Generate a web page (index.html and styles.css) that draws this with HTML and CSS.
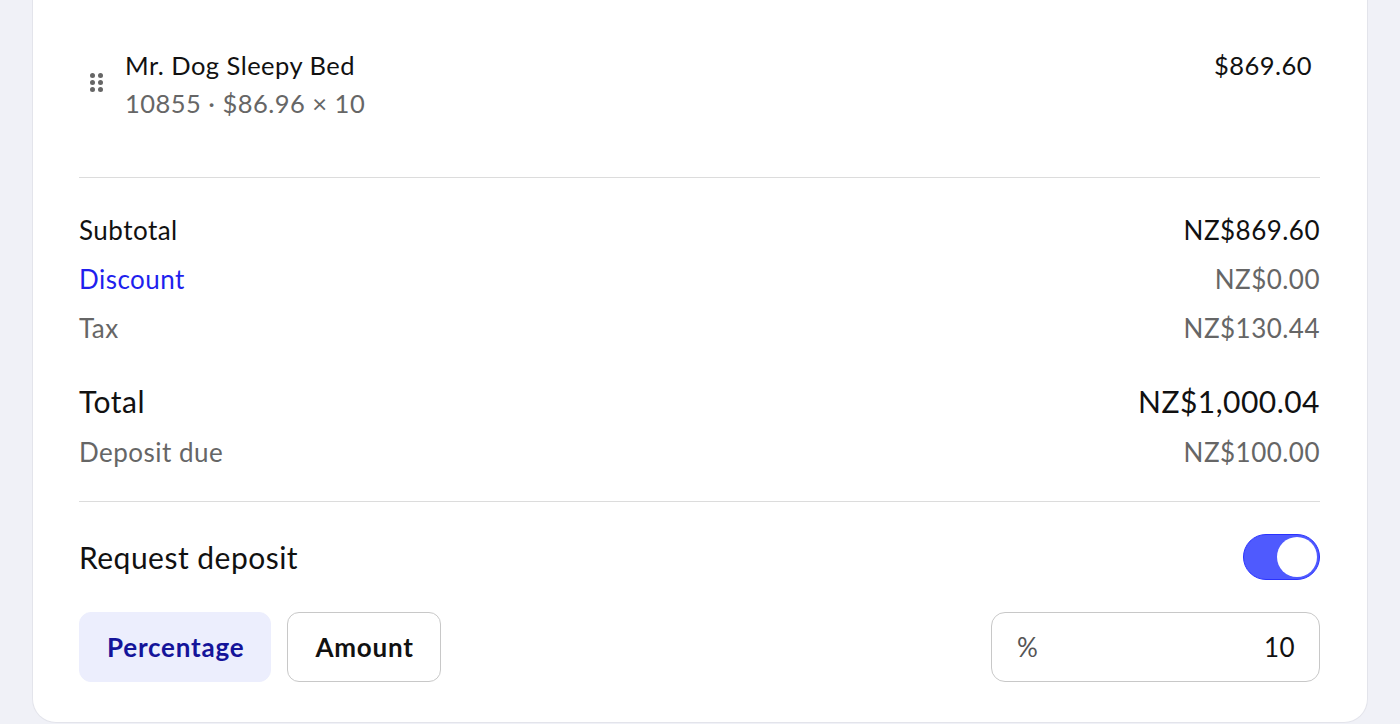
FILE: index.html
```html
<!DOCTYPE html>
<html>
<head>
<meta charset="utf-8">
<link rel="stylesheet" href="styles.css">
</head>
<body>
<div class="card">
  <div class="item">
    <div class="handle">
      <span></span><span></span><span></span><span></span><span></span><span></span>
    </div>
    <div class="item-info">
      <div class="item-title">Mr. Dog Sleepy Bed</div>
      <div class="item-sub">10855 · $86.96 × 10</div>
    </div>
    <div class="item-price">$869.60</div>
  </div>
  <div class="totals">
    <div class="row"><span>Subtotal</span><span>NZ$869.60</span></div>
    <div class="row muted"><span class="link">Discount</span><span>NZ$0.00</span></div>
    <div class="row muted"><span>Tax</span><span>NZ$130.44</span></div>
    <div class="row total"><span>Total</span><span>NZ$1,000.04</span></div>
    <div class="row muted"><span>Deposit due</span><span>NZ$100.00</span></div>
  </div>
  <div class="deposit">
    <div class="deposit-head">
      <span class="deposit-label">Request deposit</span>
      <div class="toggle"><div class="knob"></div></div>
    </div>
    <div class="deposit-controls">
      <div class="seg">
        <button class="btn active">Percentage</button>
        <button class="btn">Amount</button>
      </div>
      <div class="field"><span class="unit">%</span><span class="val">10</span></div>
    </div>
  </div>
</div>
</body>
</html>
```
FILE: styles.css
```css
* { box-sizing: border-box; }
html, body { margin: 0; padding: 0; }
body {
  background: #f0f1f7;
  font-family: Lato, "Noto Sans", sans-serif;
  letter-spacing: 0.03em;
  color: #111;
  width: 1400px;
  height: 724px;
  overflow: hidden;
}
.card {
  margin: 0 32px;
  background: #fff;
  border: 1px solid #e3e4eb;
  border-top: none;
  border-radius: 0 0 24px 24px;
  padding: 0 47px 39px 46px;
  height: 723px;
}
.item {
  display: flex;
  align-items: flex-start;
  padding: 46px 8px 55px 11px;
  border-bottom: 1px solid #dcdcdc;
}
.handle {
  display: grid;
  grid-template-columns: 5px 5px;
  column-gap: 3px;
  row-gap: 2px;
  margin-top: 27px;
  margin-right: 22px;
}
.handle span {
  width: 5px; height: 5px; border-radius: 50%;
  background: #666;
}
.item-info { flex: 1; }
.item-title { font-size: 25.5px; line-height: 38px; color: #111; }
.item-sub { font-size: 25.5px; line-height: 38px; color: #666; }
.item-price { font-size: 25.5px; line-height: 38px; color: #111; }
.totals {
  padding: 34px 0 31px;
  border-bottom: 1px solid #dcdcdc;
  display: flex;
  flex-direction: column;
  gap: 13px;
}
.row {
  display: flex;
  justify-content: space-between;
  font-size: 26px;
  line-height: 36px;
}
.row.muted { color: #666; }
.row .link { color: #1f1fee; }
.row.total { font-size: 30px; line-height: 40px; margin-top: 22px; color: #111; }
.deposit { padding-top: 32px; }
.deposit-head {
  display: flex;
  justify-content: space-between;
  align-items: center;
  height: 46px;
}
.deposit-label { font-size: 30px; color: #111; }
.toggle {
  width: 77px; height: 46px;
  border-radius: 23px;
  background: #4f5afe;
  border: 1.5px solid #2a32ff;
  display: flex;
  justify-content: flex-end;
  align-items: center;
  padding-right: 2px;
}
.knob { width: 40px; height: 40px; border-radius: 50%; background: #fff; }
.deposit-controls {
  display: flex;
  justify-content: space-between;
  margin-top: 32px;
}
.seg { display: flex; gap: 16px; }
.btn {
  font-family: Lato, "Noto Sans", sans-serif;
  letter-spacing: 0.03em;
  font-weight: 700;
  font-size: 26px;
  height: 70px;
  border-radius: 12px;
  background: #fff;
  border: 1.5px solid #c8c8c8;
  color: #111;
  padding: 0 26px 0 27px;
}
.btn.active {
  background: #eceefd;
  border-color: #eceefd;
  color: #14149a;
}
.field {
  width: 329px;
  height: 70px;
  border: 1.5px solid #c8c8c8;
  border-radius: 14px;
  display: flex;
  justify-content: space-between;
  align-items: center;
  padding: 0 24px 0 25px;
  font-size: 26px;
}
.unit { color: #555; }
.val { color: #111; }
```
